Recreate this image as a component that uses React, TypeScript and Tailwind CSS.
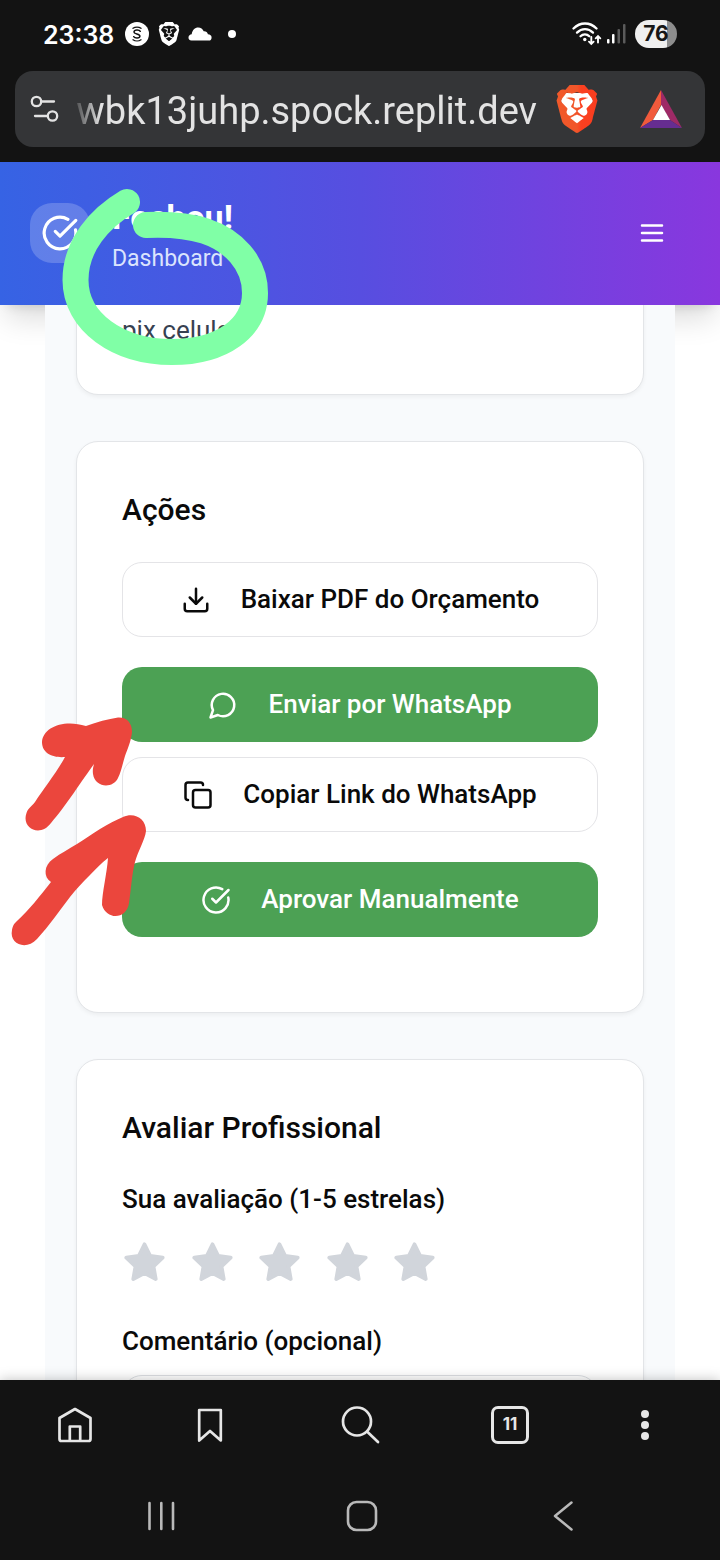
import type { ReactNode } from 'react';
import { CircleCheckBig, Copy, Download } from 'lucide-react';
import { SiBrave } from 'react-icons/si';

function StatusBar() {
  return (
    <div className="flex h-[71px] items-center justify-between pr-[43px] pb-[3px] pl-[43px] text-white">
      <div className="flex items-center">
        <span className="w-[71px] pt-0.5 font-['Inter',sans-serif] text-[25px] leading-8 font-semibold">23:38</span>
        <svg className="ml-[11px] h-6 w-6" viewBox="0 0 24 24" aria-hidden="true">
          <circle cx="12" cy="12" r="12" fill="#fff" />
          <g fill="none" stroke="#131313" strokeWidth="1.5" strokeLinecap="round">
            <path d="M15.300 9.300C14.300 7.500 9.300 7.400 9 9.900c-.2 2.500 6 1.700 5.900 4.400-.1 2.300-5 2.300-6.200.4" />
            <path d="M8 6.300c2.200-1.700 5.800-1.700 8 0M8 17.800c2.200 1.500 5.800 1.500 8 0" strokeWidth="1.300" />
          </g>
        </svg>
        <SiBrave className="ml-2 h-[26px] w-[24px]" aria-hidden="true" />
        <svg className="ml-[7px] h-[14px] w-6" viewBox="0 0 24 14" fill="#fff" aria-hidden="true">
          <path d="M3.500 13.500C1.300 13.500.3 12 .5 10.200.7 8.600 2 7.500 3.700 7.300 4.200 3 7 .5 10.200.5c2.600 0 4.500 1.400 5.500 3.700 2.200-.2 3.800 1 4.200 3.100 2.200.1 3.700 1.300 3.700 3.100 0 1.900-1 3.100-2.600 3.100z" />
        </svg>
        <span className="ml-4 h-2 w-2 rounded-full bg-white" />
      </div>
      <div className="flex items-center">
        <svg className="h-[26px] w-[30px]" viewBox="0 0 30 26" fill="none" stroke="#fff" strokeLinecap="round" aria-hidden="true">
          <path d="M1.500 7.500C8 .8 18 .8 24.500 7.500" strokeWidth="2.300" />
          <path d="M5 11.600c4.600-4.600 11.400-4.600 16 0" strokeWidth="2.300" />
          <path d="M8.500 15.300c2.500-2.500 6.300-2.500 8.800 0" strokeWidth="2.300" />
          <circle cx="12.800" cy="18.500" r="1.700" fill="#fff" stroke="none" />
          <path d="M19.300 16v7m-2.300-2.300 2.300 2.300 2.300-2.300M26 21.500v-6.500m-2.300 2.300L26 15l2.300 2.300" strokeWidth="1.900" />
        </svg>
        <svg className="ml-[5px] h-5 w-[19px]" viewBox="0 0 19 20" aria-hidden="true">
          <rect x="0" y="15" width="2.500" height="4.500" rx="1" fill="#fff" />
          <rect x="5" y="10" width="2.500" height="9.500" rx="1" fill="#fff" />
          <rect x="10.500" y="5" width="2.500" height="14.500" rx="1" fill="#5b5b5b" />
          <rect x="16" y="0" width="2.500" height="19.500" rx="1" fill="#5b5b5b" />
        </svg>
        <span className="ml-[9px] flex h-7 w-[42px] items-center justify-center rounded-full bg-linear-to-r from-[#efefef] from-76% to-[#8d8d8d] to-76% font-['Inter',sans-serif] text-[21px] font-bold text-[#161616]">
          76
        </span>
      </div>
    </div>
  );
}

function AddressBar() {
  return (
    <div className="px-[15px] pb-[15px]">
      <div className="flex h-[76px] items-center rounded-[18px] bg-[#343537] pr-[23px] pl-[15px]">
        <button type="button" aria-label="Informações do site" className="flex">
          <svg className="h-[30px] w-[30px]" viewBox="0 0 30 30" fill="none" stroke="#e3e3e3" strokeWidth="2.300" strokeLinecap="round">
            <circle cx="6.500" cy="7.500" r="4.700" />
            <path d="M11.500 7.500H24M5 22h12" />
            <circle cx="22.500" cy="22" r="4.700" />
          </svg>
        </button>
        <button
          type="button"
          className="ml-[17px] flex min-w-0 flex-1 justify-end overflow-hidden pt-1 text-[38px] leading-[52px] whitespace-nowrap text-[#e3e3e3] [mask-image:linear-gradient(to_right,rgba(0,0,0,0.2),black_24px)]"
        >
          nwbk13juhp.spock.replit.dev
        </button>
        <button type="button" aria-label="Brave Shields" className="ml-4 flex">
          <svg className="h-12 w-12" viewBox="0 0 24 24">
            <defs>
              <linearGradient id="shield" x1="0" y1="0" x2="1" y2="0">
                <stop offset="0" stopColor="#f1592a" />
                <stop offset="0.500" stopColor="#f1562a" />
                <stop offset="0.600" stopColor="#fb4020" />
                <stop offset="1" stopColor="#f93d1f" />
              </linearGradient>
            </defs>
            <path d="M5 4h14l1 4-4 12-4 2-4-2L4 8z" fill="#fff" />
            <SiBrave size={24} fill="url(#shield)" />
          </svg>
        </button>
        <button type="button" aria-label="Brave Rewards" className="ml-[39px] flex">
          <svg className="h-[38px] w-[42px]" viewBox="0 0 42 38">
            <path d="M21 0 0 38l13-8L21 15z" fill="#f15a3c" />
            <path d="M21 0v15l9 15 12 8z" fill="#9e2a66" />
            <path d="M0 38h42l-12-8H13z" fill="#662d91" />
            <path d="m21.500 15 8.500 15H13z" fill="#fff" />
          </svg>
        </button>
      </div>
    </div>
  );
}

function AppHeader() {
  return (
    <header className="flex h-[143px] shrink-0 items-center bg-linear-to-r/srgb from-[#3663e4] via-[#574ee0] to-[#8937de] pr-[53px] pb-0.5 pl-[30px] text-white shadow-[0_19px_28px_-6px_rgba(0,0,0,0.14),0_8px_11px_-8px_rgba(0,0,0,0.14)]">
      <div className="flex h-[60px] w-[60px] items-center justify-center rounded-[22px] bg-white/20">
        <CircleCheckBig className="h-[38px] w-[38px]" aria-hidden="true" />
      </div>
      <div className="ml-[22px] flex-1">
        <h1 className="text-[34px] leading-[50px] font-bold">Fechou!</h1>
        <p className="mt-0.5 text-[23px] leading-[30px] text-[#dbe4fd]">Dashboard</p>
      </div>
      <button type="button" aria-label="Menu" className="flex">
        <svg className="h-[30px] w-[30px]" viewBox="0 0 24 24" fill="none" stroke="currentColor" strokeWidth="2" strokeLinecap="round">
          <path d="M4 6h16M4 12h16M4 18h16" />
        </svg>
      </button>
    </header>
  );
}

function Card({ className = '', children }: { className?: string; children: ReactNode }) {
  return (
    <section className={`rounded-[22px] border border-[#e3e5e8] bg-white p-[45px] shadow-[0_2px_4px_rgba(0,0,0,0.05)] ${className}`}>
      {children}
    </section>
  );
}

function ActionButton({ icon, label, primary = false }: { icon: ReactNode; label: string; primary?: boolean }) {
  const tone = primary ? 'bg-[#4ca154] text-white' : 'border border-[#e4e4e7] bg-white text-[#0a0a0a]';
  return (
    <button
      type="button"
      className={`flex h-[75px] w-full items-center justify-center gap-[30px] rounded-[20px] text-[26px] font-medium ${tone}`}
    >
      {icon}
      {label}
    </button>
  );
}

function ChatIcon() {
  return (
    <svg
      className="h-[30px] w-[30px]"
      viewBox="0 0 24 24"
      fill="none"
      stroke="currentColor"
      strokeWidth="2"
      strokeLinecap="round"
      strokeLinejoin="round"
      aria-hidden="true"
    >
      <path d="M7.900 20A9 9 0 1 0 4 16.100L2 22Z" />
    </svg>
  );
}

function StarIcon() {
  return (
    <svg
      className="h-[45px] w-[45px] text-[#d1d5db]"
      viewBox="0 0 24 24"
      fill="currentColor"
      stroke="currentColor"
      strokeWidth="2"
      strokeLinejoin="round"
      aria-hidden="true"
    >
      <path d="m12 2.300 3 6.100 6.700 1-4.900 4.700 1.200 6.700-6-3.200-6 3.200 1.200-6.700L2.300 9.400l6.700-1z" />
    </svg>
  );
}

function Content() {
  return (
    <main className="min-h-0 flex-1 overflow-hidden">
      <div className="mx-[45px] flex min-h-full flex-col gap-[46px] bg-[#f8fafc] px-[31px]">
        <Card className="-mt-10">
          <p className="text-[26px] leading-[38px] text-[#374151]">pix celular</p>
        </Card>

        <Card>
          <h2 className="text-[30px] leading-[45px] font-medium">Ações</h2>
          <div className="mt-[30px] flex flex-col gap-[30px] pb-[30px]">
            <ActionButton icon={<Download className="h-[30px] w-[30px]" />} label="Baixar PDF do Orçamento" />
            <div className="flex flex-col gap-[15px]">
              <ActionButton primary icon={<ChatIcon />} label="Enviar por WhatsApp" />
              <ActionButton icon={<Copy className="h-[30px] w-[30px]" />} label="Copiar Link do WhatsApp" />
            </div>
            <ActionButton primary icon={<CircleCheckBig className="h-[30px] w-[30px]" />} label="Aprovar Manualmente" />
          </div>
        </Card>

        <Card>
          <h2 className="text-[30px] leading-[45px] font-medium">Avaliar Profissional</h2>
          <p id="rating-label" className="mt-[30px] text-[26px] leading-[38px] font-medium">
            Sua avaliação (1-5 estrelas)
          </p>
          <div role="group" aria-labelledby="rating-label" className="mt-[22px] flex max-w-[315px] justify-between">
            {[1, 2, 3, 4, 5].map((value) => (
              <button key={value} type="button" aria-label={`${value}`} className="flex">
                <StarIcon />
              </button>
            ))}
          </div>
          <label htmlFor="comment" className="mt-[37px] block text-[26px] leading-[38px] font-medium">
            Comentário (opcional)
          </label>
          <textarea id="comment" rows={3} className="mt-[15px] block w-full rounded-[20px] border border-[#dcdfe3] bg-white p-5 text-[26px]" />
        </Card>
      </div>
    </main>
  );
}

function BrowserToolbar() {
  return (
    <nav className="grid h-[90px] grid-cols-[4fr_5fr_5fr_5fr_4fr] place-items-center px-[15px] text-[#e6e6e6]">
      <button type="button" aria-label="Início">
        <svg className="h-9 w-9" viewBox="0 0 36 36" fill="none" stroke="currentColor" strokeWidth="2.700" strokeLinejoin="round">
          <path d="M18 2 33.500 11v21a2 2 0 0 1-2 2h-27a2 2 0 0 1-2-2V11z" />
          <path d="M12.800 34V19.500h10.400V34" />
        </svg>
      </button>
      <button type="button" aria-label="Favoritos">
        <svg className="h-9 w-9" viewBox="0 0 36 36" fill="none" stroke="currentColor" strokeWidth="2.700" strokeLinejoin="round">
          <path d="M7.200 3h21.600v30.500L18 24 7.200 33.500z" />
        </svg>
      </button>
      <button type="button" aria-label="Pesquisar">
        <svg className="h-10 w-10" viewBox="0 0 40 40" fill="none" stroke="currentColor" strokeWidth="2.700" strokeLinecap="round">
          <circle cx="17" cy="16.500" r="14" />
          <path d="M27 26.500 38 37" />
        </svg>
      </button>
      <button
        type="button"
        aria-label="11 abas"
        className="flex h-[38px] w-[38px] items-center justify-center rounded-[7px] border-[3px] border-current font-['Inter',sans-serif] text-[17px] font-bold"
      >
        11
      </button>
      <button type="button" aria-label="Mais opções" className="flex flex-col gap-[3px]">
        <span className="h-2 w-2 rounded-full bg-current" />
        <span className="h-2 w-2 rounded-full bg-current" />
        <span className="h-2 w-2 rounded-full bg-current" />
      </button>
    </nav>
  );
}

function SystemNavigation() {
  return (
    <nav className="grid h-[90px] grid-cols-3 place-items-center pt-0.5 pr-[56px] pl-[60px] text-[#b9b9b9]">
      <button type="button" aria-label="Recentes">
        <svg className="h-[30px] w-[30px]" viewBox="0 0 30 30" stroke="currentColor" strokeWidth="2.600" strokeLinecap="round">
          <path d="M3.500 2v26M15.300 2v26M27 2v26" />
        </svg>
      </button>
      <button type="button" aria-label="Tela inicial">
        <svg className="h-8 w-8" viewBox="0 0 32 32" fill="none" stroke="currentColor" strokeWidth="2.600">
          <rect x="2" y="2" width="28" height="28" rx="8.500" />
        </svg>
      </button>
      <button type="button" aria-label="Voltar">
        <svg className="h-[30px] w-[20px]" viewBox="0 0 20 30" fill="none" stroke="currentColor" strokeWidth="2.500" strokeLinecap="round" strokeLinejoin="round">
          <path d="M18.500 1.500 2 15l16.500 13.500" />
        </svg>
      </button>
    </nav>
  );
}

/* Freehand markup drawn over the page. */
function Markup() {
  return (
    <svg className="pointer-events-none absolute top-0 left-0 h-[960px] w-[300px]" viewBox="0 0 300 960" aria-hidden="true">
      <path
        d="M127 202C100 218 75.500 245 75.500 280C75.500 322 118 352 172 352C222 352 255 328 255 293C255 262 232 240 205 231C188 225.500 170 224 146 225"
        fill="none"
        stroke="#80ffa6"
        strokeWidth="26"
        strokeLinecap="round"
        strokeLinejoin="round"
      />
      <path
        d="M86 726C97 722 108 719 118 717.500C127 717 132 723 132 732C131 742 127 750 125 756C122 766 121 772 118 778C113 789 95 788 93 774C92.500 770 93 768 94 764C83 779 65 807 51 823C40 838 21 828 26.500 813C28 808 32 806 35 802C44 788 57 772 65 757C54 758 42 754 42 742C43 727 64 719 86 726Z"
        fill="#eb463d"
      />
      <path
        d="M123 817C135 812 146 819 146 831C145 840 138 851 135 862C132 873 131 890 129 903C127 919 107 921 102 905C102 893 107 873 108 858C101 863 96 869 90 875C83 882 76 889 70 897C59 911 49 926 37 939C26 951 9 944 12 930C13 925 14 924 17 921C29 910 40 896 51 882C43 877 44 865 53 859C61 853 69 849 77 844C85 839 92 834 100 829C108 824 116 820 123 817Z"
        fill="#eb463d"
      />
    </svg>
  );
}

export default function App() {
  return (
    <div className="relative flex h-screen flex-col overflow-hidden bg-white font-['Roboto',sans-serif] text-[#0a0a0a]">
      <div className="shrink-0 bg-[#131313]">
        <StatusBar />
        <AddressBar />
      </div>
      <AppHeader />
      <Content />
      <div className="shrink-0 bg-[#131313] shadow-[0_0_12px_rgba(0,0,0,0.25)]">
        <BrowserToolbar />
        <SystemNavigation />
      </div>
      <Markup />
    </div>
  );
}
